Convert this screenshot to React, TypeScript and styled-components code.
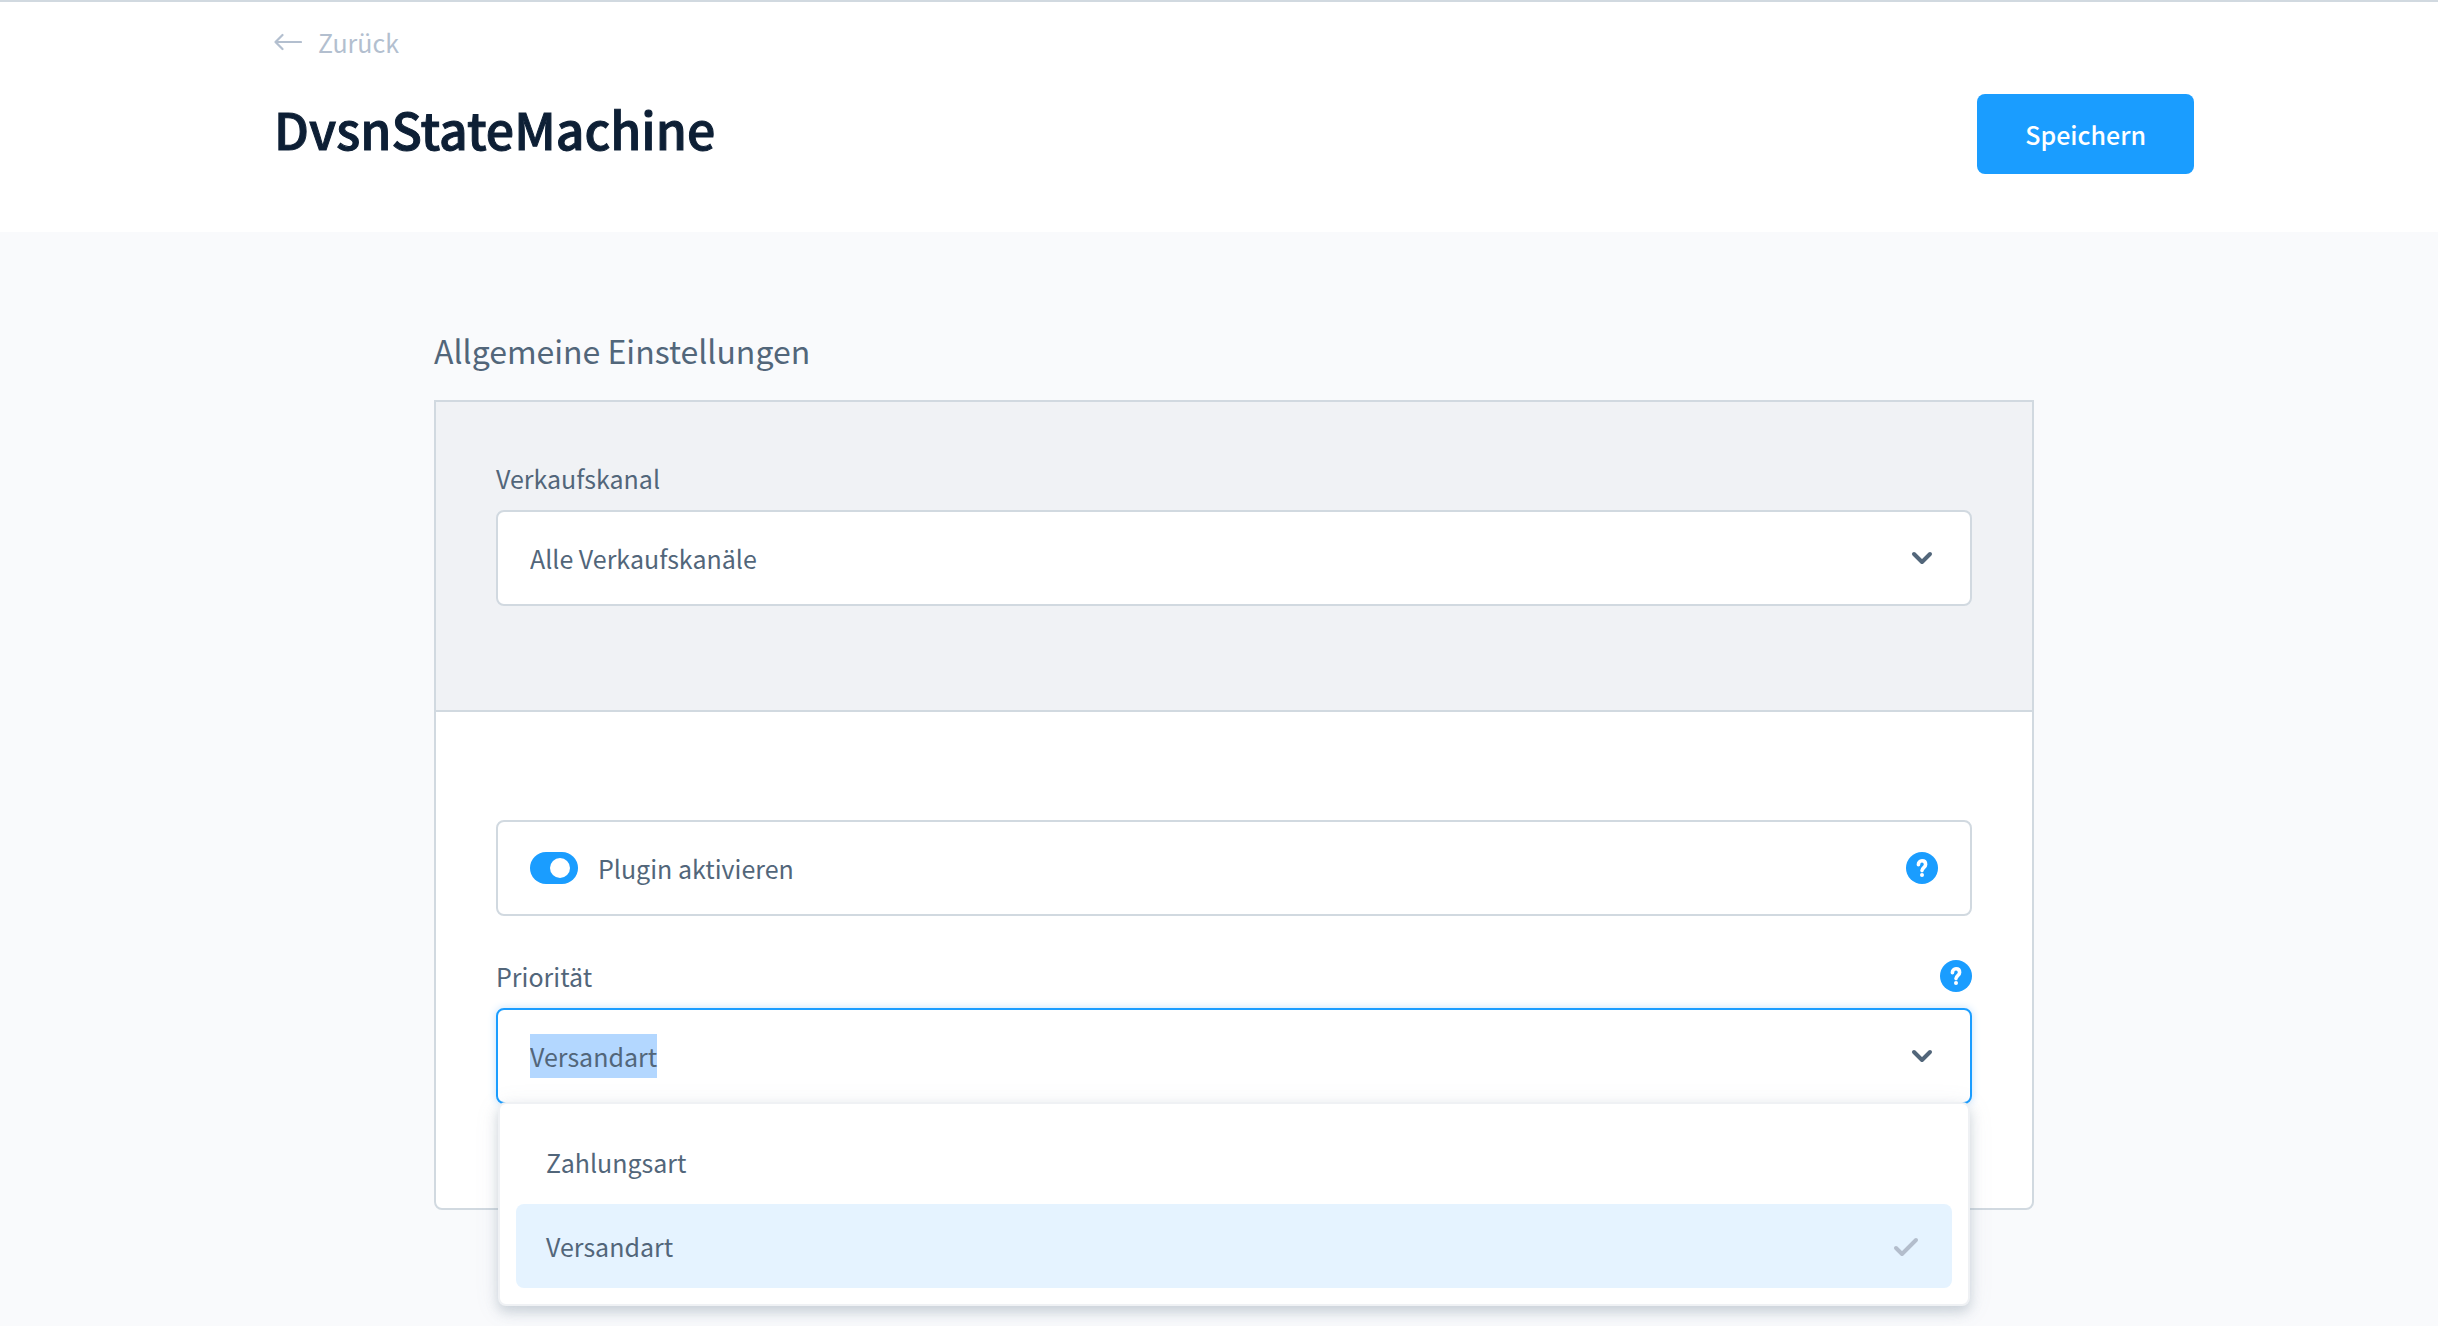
import React, { useEffect, useRef, useState } from "react";
import styled, { createGlobalStyle, css } from "styled-components";

const color = {
  page: "#f9fafc",
  white: "#ffffff",
  border: "#d1d9e0",
  borderSoft: "#eff1f4",
  panel: "#f0f2f5",
  text: "#52667a",
  title: "#0d1f35",
  muted: "#b3bfcf",
  check: "#b3bdcc",
  primary: "#1a9dff",
  active: "#e5f3ff",
  selection: "#b3d7ff",
};

const GlobalStyle = createGlobalStyle`
  *, *::before, *::after { box-sizing: border-box; }
  body {
    margin: 0;
    min-height: 100vh;
    background: ${color.page};
    color: ${color.text};
    font-family: "Source Sans Pro", "Noto Sans CJK SC", sans-serif;
    font-size: 25px;
    line-height: 40px;
  }
  button, input, select { font: inherit; color: inherit; }
`;

const Header = styled.header`
  padding: 20px 0 58px 30px;
  background: ${color.white};
  border-top: 2px solid ${color.border};
`;

const HeaderInner = styled.div`
  max-width: 1920px;
  margin: 0 auto;
`;

const BackLink = styled.a`
  display: flex;
  align-items: center;
  gap: 16px;
  width: max-content;
  margin-bottom: 32px;
  color: ${color.muted};
  text-decoration: none;
`;

const TitleRow = styled.div`
  display: flex;
  justify-content: space-between;
  align-items: flex-start;
`;

const Title = styled.h1`
  margin: 0;
  color: ${color.title};
  font-size: 50px;
  font-weight: 500;
  line-height: 68px;
  -webkit-text-stroke: 1px ${color.title};
`;

const SaveButton = styled.button`
  height: 80px;
  padding: 0 48px;
  border: 0;
  border-radius: 8px;
  background: ${color.primary};
  color: ${color.white};
  font-weight: 500;
  cursor: pointer;
`;

const Main = styled.main`
  padding: 92px 0 116px 30px;
`;

const Content = styled.div`
  max-width: 1600px;
  margin: 0 auto;
`;

const CardTitle = styled.h2`
  margin: 0 0 24px;
  font-size: 32px;
  font-weight: 400;
  line-height: 52px;
`;

const Card = styled.section`
  border: 2px solid ${color.border};
  border-radius: 0 0 8px 8px;
  background: ${color.white};
`;

const ChannelSection = styled.div`
  padding: 60px;
  background: ${color.panel};
  border-bottom: 2px solid ${color.border};
`;

const SettingsSection = styled.div`
  padding: 108px 60px 60px;
`;

const Field = styled.div`
  position: relative;
  margin-bottom: 44px;
`;

const LabelRow = styled.div`
  display: flex;
  justify-content: space-between;
  align-items: center;
  height: 32px;
  margin-bottom: 16px;
`;

const Box = styled.div<{ $focused?: boolean }>`
  display: flex;
  align-items: center;
  height: 96px;
  padding: 0 32px;
  border: 2px solid ${color.border};
  border-radius: 8px;
  background: ${color.white};
  ${(p) =>
    p.$focused &&
    css`
      border-color: ${color.primary};
      box-shadow: 0 0 8px #c4e1fb;
    `}
`;

const SelectBox = styled(Box)`
  display: grid;
  grid-template-columns: minmax(0, 1fr) 32px;
`;

const Select = styled.select`
  grid-area: 1 / 1 / 2 / 3;
  width: 100%;
  height: 92px;
  padding: 0;
  border: 0;
  outline: 0;
  background: transparent;
  appearance: none;
`;

const ChevronSlot = styled.span`
  display: flex;
  grid-area: 1 / 2 / 2 / 3;
  pointer-events: none;
`;

const ComboInput = styled.input`
  flex: 1;
  min-width: 0;
  height: 44px;
  padding: 0;
  border: 0;
  outline: 0;
  background: transparent;
  line-height: 44px;

  &::selection {
    background: ${color.selection};
    color: ${color.text};
  }
`;

const Switch = styled.input`
  display: flex;
  align-items: center;
  flex: none;
  width: 48px;
  height: 32px;
  margin: 0 20px 0 0;
  padding: 0 8px;
  border-radius: 16px;
  background: ${color.border};
  appearance: none;

  &::before {
    content: "";
    width: 20px;
    height: 20px;
    border-radius: 50%;
    background: ${color.white};
  }

  &:checked {
    justify-content: flex-end;
    background: ${color.primary};
  }
`;

const SwitchLabel = styled.label`
  flex: 1;
`;

const HelpButton = styled.button`
  display: flex;
  width: 32px;
  height: 32px;
  padding: 0;
  border: 0;
  border-radius: 50%;
  background: ${color.primary};
  color: ${color.white};
`;

const Options = styled.ul`
  position: absolute;
  top: calc(100% - 2px);
  left: 2px;
  right: 2px;
  z-index: 1;
  margin: 0;
  padding: 16px;
  list-style: none;
  background: ${color.white};
  border: 2px solid ${color.borderSoft};
  border-radius: 8px;
  box-shadow: 0 6px 12px rgba(120, 138, 155, 0.3), 0 4px 24px rgba(120, 138, 155, 0.12);
`;

const Option = styled.li<{ $selected: boolean }>`
  display: flex;
  justify-content: space-between;
  align-items: center;
  height: 84px;
  padding: 0 30px;
  border-radius: 8px;
  background: ${(p) => (p.$selected ? color.active : "transparent")};
  cursor: pointer;
`;

const ArrowLeft = () => (
  <svg width="28" height="20" viewBox="0 0 28 20" fill="none" stroke="currentColor" strokeWidth="2.2" strokeLinecap="round" strokeLinejoin="round" aria-hidden="true">
    <path d="M27 10H1.5M8.5 3L1.5 10L8.5 17" />
  </svg>
);

const Chevron = () => (
  <svg width="32" height="32" viewBox="0 0 32 32" fill="none" stroke={color.text} strokeWidth="4" strokeLinecap="round" strokeLinejoin="round" aria-hidden="true">
    <path d="M8 12L16 20L24 12" />
  </svg>
);

const Check = () => (
  <svg width="32" height="32" viewBox="0 0 32 32" fill="none" stroke={color.check} strokeWidth="4" strokeLinecap="round" strokeLinejoin="round" aria-hidden="true">
    <path d="M6 18L12 24L26 10" />
  </svg>
);

const QuestionMark = () => (
  <svg width="32" height="32" viewBox="0 0 32 32" fill="none" aria-hidden="true">
    <path d="M12.4 12.8C12.4 10.4 13.9 8.8 16 8.8C18.2 8.8 19.6 10.3 19.6 12.4C19.6 15.6 16 15.6 16 18.6" stroke="currentColor" strokeWidth="3.6" strokeLinecap="round" />
    <circle cx="16" cy="23" r="2" fill="currentColor" />
  </svg>
);

const priorities = ["Zahlungsart", "Versandart"];

export default function App() {
  const [active, setActive] = useState(true);
  const [priority, setPriority] = useState("Versandart");
  const priorityInput = useRef<HTMLInputElement>(null);

  useEffect(() => {
    priorityInput.current?.focus();
    priorityInput.current?.select();
  }, []);

  return (
    <>
      <GlobalStyle />
      <Header>
        <HeaderInner>
          <BackLink href="#">
            <ArrowLeft />
            Zurück
          </BackLink>
          <TitleRow>
            <Title>DvsnStateMachine</Title>
            <SaveButton type="button">Speichern</SaveButton>
          </TitleRow>
        </HeaderInner>
      </Header>
      <Main>
        <Content>
          <CardTitle>Allgemeine Einstellungen</CardTitle>
          <Card>
            <ChannelSection>
              <Field>
                <LabelRow>
                  <label htmlFor="channel">Verkaufskanal</label>
                </LabelRow>
                <SelectBox>
                  <Select id="channel">
                    <option>Alle Verkaufskanäle</option>
                  </Select>
                  <ChevronSlot>
                    <Chevron />
                  </ChevronSlot>
                </SelectBox>
              </Field>
            </ChannelSection>
            <SettingsSection>
              <Field>
                <Box>
                  <Switch
                    id="active"
                    type="checkbox"
                    role="switch"
                    checked={active}
                    onChange={(e) => setActive(e.target.checked)}
                  />
                  <SwitchLabel htmlFor="active">Plugin aktivieren</SwitchLabel>
                  <HelpButton type="button" aria-label="Hilfe">
                    <QuestionMark />
                  </HelpButton>
                </Box>
              </Field>
              <Field>
                <LabelRow>
                  <label htmlFor="priority">Priorität</label>
                  <HelpButton type="button" aria-label="Hilfe">
                    <QuestionMark />
                  </HelpButton>
                </LabelRow>
                <Box $focused>
                  <ComboInput
                    ref={priorityInput}
                    id="priority"
                    type="text"
                    role="combobox"
                    aria-expanded="true"
                    aria-controls="priority-options"
                    autoComplete="off"
                    spellCheck={false}
                    value={priority}
                    onChange={(e) => setPriority(e.target.value)}
                  />
                  <Chevron />
                </Box>
                <Options id="priority-options" role="listbox">
                  {priorities.map((name) => (
                    <Option
                      key={name}
                      role="option"
                      aria-selected={name === priority}
                      $selected={name === priority}
                      onClick={() => setPriority(name)}
                    >
                      {name}
                      {name === priority && <Check />}
                    </Option>
                  ))}
                </Options>
              </Field>
            </SettingsSection>
          </Card>
        </Content>
      </Main>
    </>
  );
}
